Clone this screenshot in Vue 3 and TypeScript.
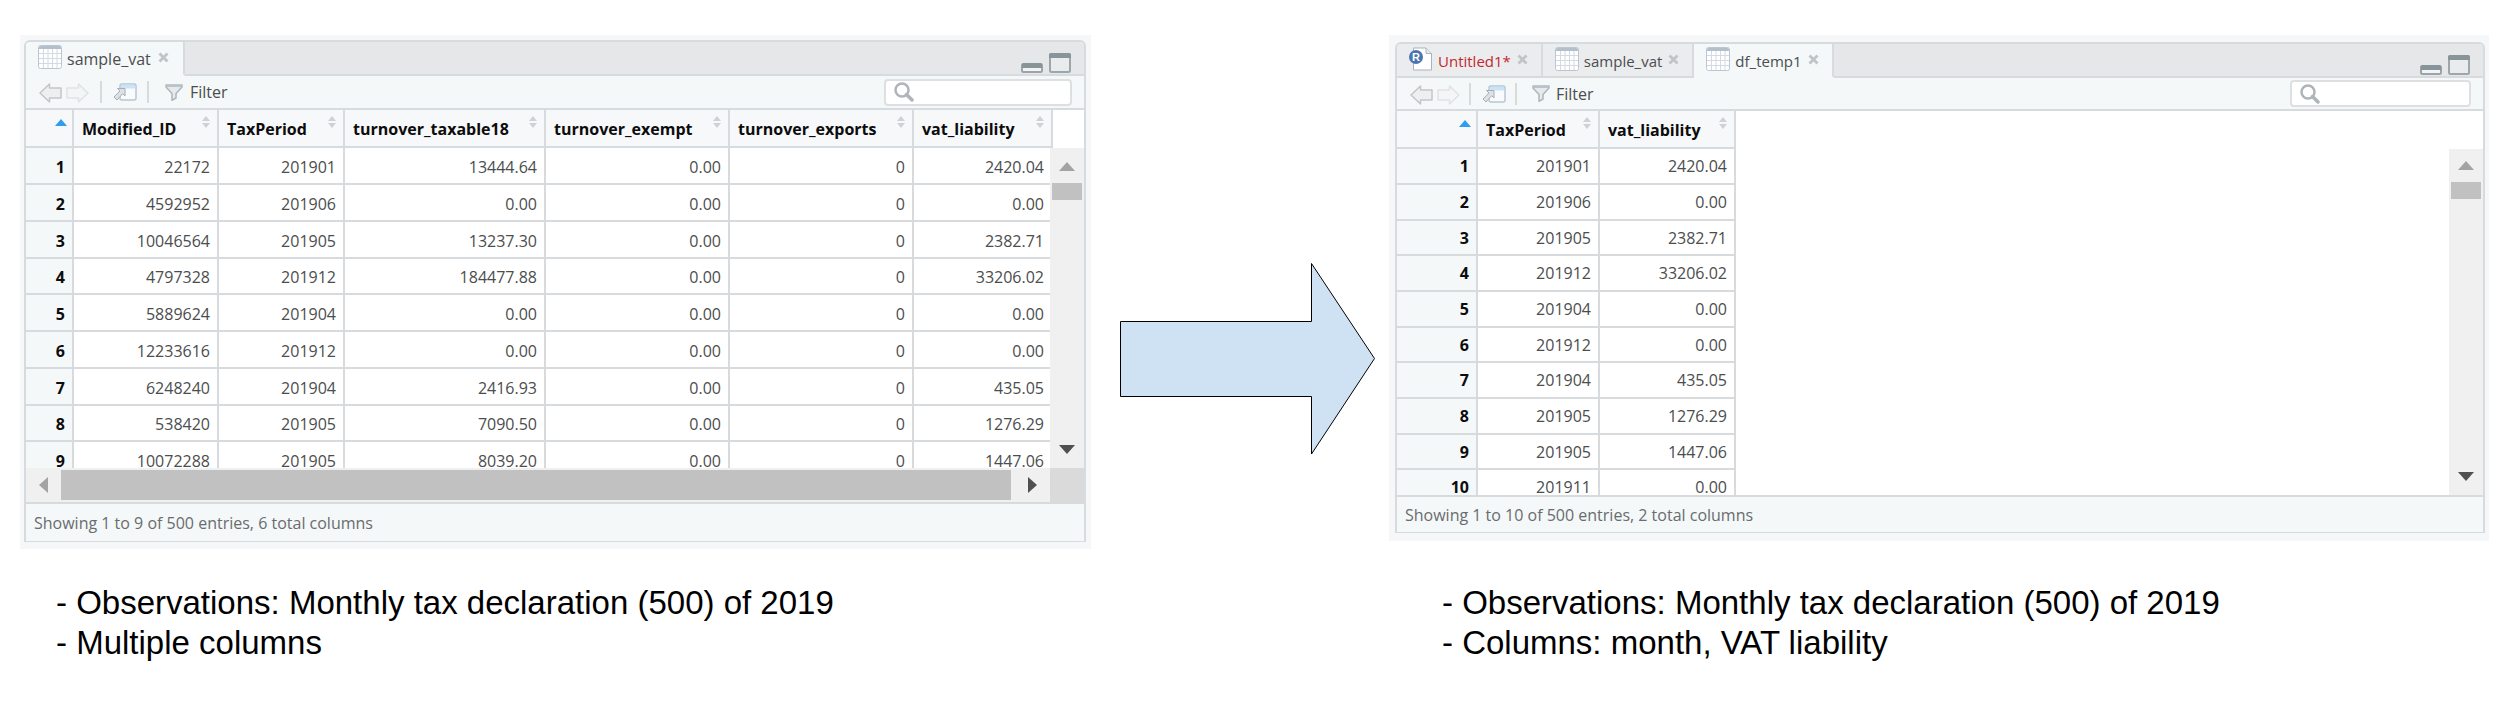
<script setup lang="ts">
interface Tab {
  label: string
  kind: 'grid' | 'script'
  active: boolean
}
interface Column {
  name: string
  width: number
}
interface Viewer {
  id: string
  tabs: Tab[]
  columns: Column[]
  indexWidth: number
  rows: string[][]
  status: string
  horizontal: boolean
  notes: string[]
}

const viewers: Viewer[] = [
  {
    id: 'source',
    tabs: [{ label: 'sample_vat', kind: 'grid', active: true }],
    indexWidth: 48,
    columns: [
      { name: 'Modified_ID', width: 145 },
      { name: 'TaxPeriod', width: 126 },
      { name: 'turnover_taxable18', width: 201 },
      { name: 'turnover_exempt', width: 184 },
      { name: 'turnover_exports', width: 184 },
      { name: 'vat_liability', width: 139 },
    ],
    rows: [
      ['22172', '201901', '13444.64', '0.00', '0', '2420.04'],
      ['4592952', '201906', '0.00', '0.00', '0', '0.00'],
      ['10046564', '201905', '13237.30', '0.00', '0', '2382.71'],
      ['4797328', '201912', '184477.88', '0.00', '0', '33206.02'],
      ['5889624', '201904', '0.00', '0.00', '0', '0.00'],
      ['12233616', '201912', '0.00', '0.00', '0', '0.00'],
      ['6248240', '201904', '2416.93', '0.00', '0', '435.05'],
      ['538420', '201905', '7090.50', '0.00', '0', '1276.29'],
      ['10072288', '201905', '8039.20', '0.00', '0', '1447.06'],
    ],
    status: 'Showing 1 to 9 of 500 entries, 6 total columns',
    horizontal: true,
    notes: ['- Observations: Monthly tax declaration (500) of 2019', '- Multiple columns'],
  },
  {
    id: 'result',
    tabs: [
      { label: 'Untitled1*', kind: 'script', active: false },
      { label: 'sample_vat', kind: 'grid', active: false },
      { label: 'df_temp1', kind: 'grid', active: true },
    ],
    indexWidth: 81,
    columns: [
      { name: 'TaxPeriod', width: 122 },
      { name: 'vat_liability', width: 136 },
    ],
    rows: [
      ['201901', '2420.04'],
      ['201906', '0.00'],
      ['201905', '2382.71'],
      ['201912', '33206.02'],
      ['201904', '0.00'],
      ['201912', '0.00'],
      ['201904', '435.05'],
      ['201905', '1276.29'],
      ['201905', '1447.06'],
      ['201911', '0.00'],
    ],
    status: 'Showing 1 to 10 of 500 entries, 2 total columns',
    horizontal: false,
    notes: ['- Observations: Monthly tax declaration (500) of 2019', '- Columns: month, VAT liability'],
  },
]

const tableWidth = (v: Viewer): string =>
  v.columns.reduce((sum, c) => sum + c.width, v.indexWidth) + 'px'
</script>

<template>
  <main class="page">
    <template v-for="(v, i) in viewers" :key="v.id">
      <div v-if="i > 0" class="flow">
        <svg class="flow-arrow" viewBox="0 0 256 192" aria-hidden="true">
          <path d="M.5 58.5H191.5V.5L254.5 95.5L191.5 191V133.5H.5Z" fill="#cfe2f3" stroke="#000" />
        </svg>
      </div>

      <section class="column">
        <div class="panel" :class="v.id">
          <div class="pane">
            <div class="strip">
              <div v-for="t in v.tabs" :key="t.label" class="tab" :class="{ active: t.active }">
                <button class="tab-main" :class="t.kind">
                  <svg v-if="t.kind === 'grid'" class="tab-icon" viewBox="0 0 24 24">
                    <rect x=".5" y=".5" width="23" height="23" rx="2" fill="#fff" stroke="#bcc6d0" />
                    <path d="M1 4V2.500Q1 1 2.500 1H21.500Q23 1 23 2.500V4Z" fill="#b3c0cb" />
                    <path d="M5.500 4V23M10 4V23M14.500 4V23M19 4V23M1 8.500H23M1 13.500H23M1 18.500H23" stroke="#d3dae4" fill="none" />
                  </svg>
                  <svg v-else class="tab-icon" viewBox="0 0 24 24">
                    <path d="M4.500 1H17L22.500 6.500V23H4.500Z" fill="#fff" stroke="#aab2bc" />
                    <path d="M17 1V6.500H22.500" fill="#e6eaee" stroke="#aab2bc" />
                    <circle cx="7" cy="10" r="7" fill="#4a76ae" />
                    <text x="7" y="14" text-anchor="middle" font-family="Liberation Sans, sans-serif" font-size="11" font-weight="700" fill="#fff">R</text>
                  </svg>
                  <span class="tab-label">{{ t.label }}</span>
                </button>
                <button class="close" :aria-label="'Close ' + t.label">
                  <svg viewBox="0 0 11 11"><path d="M1.500 1.500L9.500 9.500M9.500 1.500L1.500 9.500" stroke="#c1c4c6" stroke-width="2.800" /></svg>
                </button>
              </div>
              <div class="window-buttons">
                <button aria-label="Minimize">
                  <svg viewBox="0 0 22 20">
                    <rect x="1" y="11" width="20" height="8" rx="1.500" fill="#f1f3f4" stroke="#9aa4a9" stroke-width="2" />
                    <path d="M1 15V11.500Q1 10 2.500 10H19.500Q21 10 21 11.500V15Z" fill="#88949a" />
                  </svg>
                </button>
                <button aria-label="Maximize">
                  <svg viewBox="0 0 22 20">
                    <rect x="1" y="1" width="20" height="18" rx="1.500" fill="#e9ebec" stroke="#9ba7ad" stroke-width="2" />
                    <path d="M0 5V2Q0 0 2 0H20Q22 0 22 2V5Z" fill="#88949a" />
                  </svg>
                </button>
              </div>
            </div>

            <div class="toolbar">
              <button class="nav" aria-label="Back">
                <svg viewBox="0 0 23 20"><path d="M1 10L10.500 1V5H22V15H10.500V19Z" fill="#eeeff0" stroke="#c3c6c8" stroke-width="1.500" stroke-linejoin="round" /></svg>
              </button>
              <button class="nav" aria-label="Forward">
                <svg viewBox="0 0 23 20"><path d="M22 10L12.500 1V5H1V15H12.500V19Z" fill="#f3f5f6" stroke="#dfe3e4" stroke-width="1.500" stroke-linejoin="round" /></svg>
              </button>
              <span class="divider"></span>
              <button class="popout" aria-label="Show in new window">
                <svg viewBox="0 0 24 18">
                  <rect x="7" y="1" width="16" height="16" rx="2" fill="#f8fafc" stroke="#b7c6d4" stroke-width="1.500" />
                  <path d="M8 5.500V3Q8 1.700 9.300 1.700H21Q22.300 1.700 22.300 3V5.500Z" fill="#cbe3f8" />
                  <path d="M4.500 5.500H12V13L9.700 10.700L4 17L1 14L6.900 8Z" fill="#dde2e6" stroke="#a4aeb7" stroke-linejoin="round" />
                </svg>
              </button>
              <span class="divider"></span>
              <button class="filter">
                <svg viewBox="0 0 18 17"><path d="M1 1H17V3L11 9.500V14L7 16.300V9.500L1 3Z" fill="#e6eaec" stroke="#adb6bb" stroke-width="1.500" stroke-linejoin="round" /><path d="M1.500 2H16.500" stroke="#b9c3c9" stroke-width="2" /></svg>
                <span>Filter</span>
              </button>
              <label class="search">
                <svg viewBox="0 0 20 20"><circle cx="8" cy="8" r="6.500" fill="none" stroke="#acb5ba" stroke-width="2.500" /><path d="M12.500 12.500L18 18" stroke="#acb5ba" stroke-width="3.500" stroke-linecap="round" /></svg>
                <input type="search" aria-label="Search the table" />
              </label>
            </div>

            <div class="viewport">
              <table :style="{ width: tableWidth(v) }">
                <colgroup>
                  <col :style="{ width: v.indexWidth + 'px' }" />
                  <col v-for="c in v.columns" :key="c.name" :style="{ width: c.width + 'px' }" />
                </colgroup>
                <thead>
                  <tr>
                    <th class="corner" scope="col" aria-label="Row">
                      <svg class="sorted" viewBox="0 0 12 7"><path d="M6 0L12 7H0Z" fill="#2f9df0" /></svg>
                    </th>
                    <th v-for="c in v.columns" :key="c.name" scope="col">
                      <div class="head">
                        <span>{{ c.name }}</span>
                        <button class="sort" :aria-label="'Sort by ' + c.name">
                          <svg viewBox="0 0 8 12"><path d="M4 0L8 5H0ZM4 12L0 7H8Z" fill="#ced2d5" /></svg>
                        </button>
                      </div>
                    </th>
                  </tr>
                </thead>
                <tbody>
                  <tr v-for="(row, r) in v.rows" :key="r">
                    <th scope="row">{{ r + 1 }}</th>
                    <td v-for="(cell, k) in row" :key="k">{{ cell }}</td>
                  </tr>
                </tbody>
              </table>
              <div class="vscroll">
                <svg class="tri" viewBox="0 0 16 9"><path d="M8 0L16 9H0Z" fill="#a3a3a3" /></svg>
                <span class="thumb"></span>
                <svg class="tri down" viewBox="0 0 16 9"><path d="M0 0H16L8 9Z" fill="#505050" /></svg>
              </div>
            </div>

            <div v-if="v.horizontal" class="hscroll">
              <svg viewBox="0 0 9 16"><path d="M9 0V16L0 8Z" fill="#a3a3a3" /></svg>
              <span class="thumb"></span>
              <svg viewBox="0 0 9 16"><path d="M0 0L9 8L0 16Z" fill="#505050" /></svg>
              <span class="scroll-corner"></span>
            </div>

            <footer class="status">{{ v.status }}</footer>
          </div>
        </div>
      </section>
    </template>

    <div v-for="v in viewers" :key="v.id + '-notes'" class="notes" :class="v.id">
      <p v-for="n in v.notes" :key="n">{{ n }}</p>
    </div>
  </main>
</template>

<style>
body {
  margin: 0;
  background: #fff;
}
</style>

<style scoped>
* {
  box-sizing: border-box;
}
.page {
  display: grid;
  grid-template-columns: 1071fr 298px 1100fr;
  align-items: start;
  row-gap: 34px;
  padding: 35px 11px 0 20px;
  font-family: "Open Sans", "Noto Sans", sans-serif;
}
svg {
  display: block;
}
button {
  display: block;
  margin: 0;
  padding: 0;
  border: 0;
  background: none;
  font: inherit;
  color: inherit;
  text-align: left;
}
.panel {
  --line: #d7dbde;
  padding: 5px 5px 7px 4px;
  background: #f5f7f9;
  font-size: 16px;
  color: #4b4d4e;
}
.panel.result {
  padding: 7px 4px 8px 6px;
}
.pane {
  border: 2px solid var(--line);
  border-bottom-width: 1px;
  border-radius: 6px 6px 0 0;
  overflow: hidden;
  background: #f4f8f9;
}

.strip {
  display: flex;
  height: 34px;
  background: #e5e7e9;
  box-shadow: inset 0 -2px var(--line);
}
.tab {
  display: flex;
  align-items: center;
  gap: 7px;
  padding: 0 14px 2px 12px;
  border-right: 2px solid var(--line);
  border-bottom: 2px solid var(--line);
  background: #ebecee;
}
.result .tab {
  gap: 6px;
  padding-right: 13px;
  font-size: 15px;
}
.tab.active {
  border-bottom-color: #f4f8f9;
  background: #f4f8f9;
}
.tab-main {
  display: flex;
  align-items: center;
  gap: 5px;
}
.tab-main.script {
  color: #c4282d;
}
.tab-icon {
  width: 24px;
  height: 24px;
}
.tab-label {
  padding-top: 4px;
  line-height: 22px;
}
.close svg {
  width: 11px;
  height: 11px;
}
.window-buttons {
  display: flex;
  gap: 6px;
  margin-left: auto;
  padding: 8px 13px 0 0;
}
.window-buttons svg {
  width: 22px;
  height: 20px;
}

.toolbar {
  display: flex;
  align-items: center;
  height: 34px;
  padding: 0 12px 0 13px;
  border-bottom: 2px solid var(--line);
}
.result .toolbar {
  height: 33px;
}
.nav {
  margin: 2px 4px 0 0;
}
.nav svg {
  width: 23px;
  height: 20px;
}
.divider {
  width: 2px;
  height: 22px;
  margin: 0 11px 0 7px;
  background: var(--line);
}
.result .divider {
  margin-left: 5px;
}
.popout svg {
  width: 24px;
  height: 18px;
}
.popout + .divider {
  margin: 0 16px 0 10px;
}
.result .popout + .divider {
  margin: 0 15px 0 9px;
}
.filter {
  display: flex;
  align-items: center;
  gap: 7px;
}
.result .filter {
  gap: 6px;
}
.filter svg {
  width: 18px;
  height: 17px;
}
.search {
  display: flex;
  align-items: center;
  width: 188px;
  height: 27px;
  margin-left: auto;
  padding: 0 8px;
  border: 2px solid #dce0e2;
  border-radius: 4px;
  background: #fff;
}
.result .search {
  width: 181px;
}
.search svg {
  flex: none;
  width: 20px;
  height: 20px;
}
.search input {
  flex: 1;
  min-width: 0;
  height: 20px;
  padding: 0 4px;
  border: 0;
  outline: 0;
  background: none;
  font: inherit;
}

.viewport {
  position: relative;
  height: 358px;
  overflow: hidden;
  background: #fff;
}
.result .viewport {
  height: 384px;
}
table {
  table-layout: fixed;
  border-collapse: separate;
  border-spacing: 0;
}
th,
td {
  height: 37px;
  padding: 2px 7px 0;
  border-right: 2px solid var(--line);
  border-bottom: 2px solid var(--line);
  line-height: 22px;
  text-align: right;
}
tbody tr:nth-child(4n) > * {
  height: 36px;
}
td {
  background: #fff;
}
th {
  color: #0c0c0c;
  font-weight: 700;
}
thead th {
  height: 38px;
  padding: 0 7px 0 8px;
  background: #f6f8fa;
}
tbody th {
  background: #f4f8f9;
}
.result tbody tr > * {
  height: 36px;
  padding-top: 0;
}
.result tbody tr:nth-child(3n) > * {
  height: 35px;
}
.sorted {
  width: 12px;
  height: 7px;
  margin: 0 0 12px auto;
}
.corner {
  padding-right: 5px;
}
.head {
  display: flex;
  justify-content: space-between;
  align-items: flex-start;
}
.head span {
  padding-top: 2px;
}
.sort svg {
  width: 8px;
  height: 12px;
}
.vscroll {
  position: absolute;
  top: 38px;
  right: 0;
  bottom: 0;
  display: flex;
  flex-direction: column;
  align-items: center;
  width: 34px;
  padding: 14px 0;
  background: #f0f0f0;
}
.result .vscroll {
  padding-top: 12px;
}
.tri {
  width: 16px;
  height: 9px;
}
.vscroll .thumb {
  width: 30px;
  height: 17px;
  margin-top: 12px;
  background: #c1c1c1;
}
.down {
  margin-top: auto;
}
.hscroll {
  display: flex;
  align-items: center;
  gap: 13px;
  height: 34px;
  padding-left: 13px;
  background: #f0f0f0;
}
.hscroll svg {
  width: 9px;
  height: 16px;
}
.hscroll .thumb {
  flex: 1;
  height: 30px;
  background: #c1c1c1;
}
.hscroll svg:nth-of-type(2) {
  margin-left: 4px;
}
.scroll-corner {
  width: 34px;
  height: 34px;
  background: #dadada;
}
.status {
  height: 39px;
  padding: 0 8px;
  border-top: 2px solid var(--line);
  line-height: 38px;
  color: #696c6e;
}
.result .status {
  height: 37px;
  line-height: 36px;
}

.flow {
  padding: 228px 13px 0 29px;
}
.flow-arrow {
  width: 256px;
  height: 192px;
}
.notes {
  padding-left: 36px;
  font-family: "Liberation Sans", Arial, sans-serif;
  font-size: 33px;
  line-height: 40px;
  color: #000;
}
.notes.result {
  grid-column: 3;
  padding-left: 53px;
}
.notes p {
  margin: 0;
}
</style>
